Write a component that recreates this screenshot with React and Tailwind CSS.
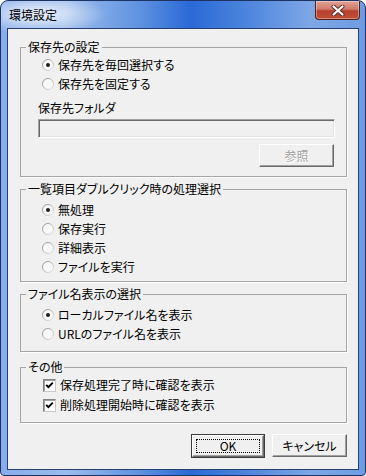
import React from 'react'

const FONT = "font-['Noto_Sans_CJK_JP','Noto_Sans',sans-serif] [font-feature-settings:'palt']"

function Radio({ checked }) {
  return (
    <svg width="12" height="12" viewBox="0 0 12 12" className="shrink-0">
      <defs>
        <linearGradient id="rb" x1="0" y1="0" x2="1" y2="1">
          <stop offset="0" stopColor="#8c8c8c" />
          <stop offset="1" stopColor="#e6e6e6" />
        </linearGradient>
      </defs>
      <circle cx="6" cy="6" r="5.5" fill="#f8f8f8" stroke="url(#rb)" />
      {checked && <circle cx="6" cy="6" r="2" fill="#1e1e1e" />}
    </svg>
  )
}

function Check() {
  return (
    <span className="w-[13px] h-[13px] shrink-0 border border-t-[#808080] border-l-[#808080] border-b-[#c8c8c8] border-r-[#c8c8c8] bg-white shadow-[inset_1px_1px_0_#a0a0a0] flex items-center justify-center">
      <svg width="9" height="9" viewBox="0 0 9 9">
        <path d="M1.2 3.8 L3.4 6.2 L7.8 1.6" stroke="#000" strokeWidth="1.9" fill="none" />
      </svg>
    </span>
  )
}

function RadioRow({ checked, children }) {
  return (
    <div className="h-[19px] flex items-center gap-[4px]">
      <Radio checked={checked} />
      <span>{children}</span>
    </div>
  )
}

function CheckRow({ children }) {
  return (
    <div className="h-[20px] flex items-center gap-[4px]">
      <Check />
      <span>{children}</span>
    </div>
  )
}

function Group({ title, className = '', children }) {
  return (
    <fieldset className={`ml-[12px] w-[327px] border border-[#a5a5a5] shadow-[1px_1px_0_#fff] ${className}`}>
      <legend className="ml-[5px] px-[2px] h-[12px] leading-[12px]">{title}</legend>
      {children}
    </fieldset>
  )
}

function ClassicButton({ children, disabled, isDefault }) {
  const face = (
    <div className="h-full w-full border border-t-white border-l-white border-b-[#696969] border-r-[#696969] shadow-[inset_-1px_-1px_0_#a0a0a0] flex items-center justify-center">
      {isDefault ? (
        <div className="w-[calc(100%-6px)] h-[calc(100%-6px)] border border-dotted border-black flex items-center justify-center">
          {children}
        </div>
      ) : (
        <span className={disabled ? 'text-[#a0a0a0] [text-shadow:1px_1px_0_#fff]' : ''}>{children}</span>
      )}
    </div>
  )
  if (isDefault) {
    return <div className="w-[74px] h-[24px] border border-[#3c3c3c]">{face}</div>
  }
  return <div className="w-[75px] h-[23px]">{face}</div>
}

export default function App() {
  return (
    <div className={`${FONT} text-[12px] leading-[12px] text-black w-[366px] h-[476px] flex flex-col border border-[#1d3463] rounded-t-[8px] rounded-b-[4px] overflow-hidden bg-[radial-gradient(ellipse_70px_20px_at_36px_13px,rgba(255,255,255,0.85),rgba(255,255,255,0)),linear-gradient(90deg,#86acea_0%,#9cbcec_18%,#5f92e0_38%,#2a69d6_52%,#4e86dd_68%,#7ea7e6_85%,#6e9ce3_100%)]`}>
      {/* title bar */}
      <div className="h-[27px] flex items-start justify-between shrink-0">
        <span className="pl-[8px] pt-[8px]">環境設定</span>
        <div className="mr-[5px] w-[45px] h-[19px] rounded-b-[4px] border border-t-0 border-[#52231b] bg-[linear-gradient(180deg,#e2a295_0%,#d07a6b_45%,#b5402c_55%,#c24f37_100%)] shadow-[inset_0_0_0_1px_rgba(255,255,255,0.35)] flex items-center justify-center">
          <svg width="14" height="11" viewBox="0 0 14 11">
            <path d="M2.5 1.5 L11.5 9.5 M11.5 1.5 L2.5 9.5" stroke="#5a2a22" strokeWidth="4" strokeLinecap="round" />
            <path d="M2.5 1.5 L11.5 9.5 M11.5 1.5 L2.5 9.5" stroke="#ffffff" strokeWidth="2.2" strokeLinecap="round" />
          </svg>
        </div>
      </div>

      {/* client area */}
      <div className="ml-[6px] w-[352px] h-[442px] border border-[#23406f] bg-[#f0f0f0] flex flex-col">
        <Group title="保存先の設定" className="mt-[12px]">
          <div className="pl-[21px] mt-[2px]">
            <RadioRow checked>保存先を毎回選択する</RadioRow>
            <RadioRow>保存先を固定する</RadioRow>
          </div>
          <div className="pl-[17px] mt-[8px] h-[14px] flex items-center">保存先フォルダ</div>
          <div className="ml-[17px] mt-[4px] w-[297px] h-[19px] border border-t-[#a0a0a0] border-l-[#a0a0a0] border-b-white border-r-white shadow-[inset_1px_1px_0_#696969,inset_-1px_-1px_0_#e3e3e3] bg-[#f0f0f0]" />
          <div className="ml-[238px] mt-[6px] mb-[9px]">
            <ClassicButton disabled>参照</ClassicButton>
          </div>
        </Group>

        <Group title="一覧項目ダブルクリック時の処理選択" className="mt-[6px]">
          <div className="pl-[21px] mt-[5px] pb-[5px]">
            <RadioRow checked>無処理</RadioRow>
            <RadioRow>保存実行</RadioRow>
            <RadioRow>詳細表示</RadioRow>
            <RadioRow>ファイルを実行</RadioRow>
          </div>
        </Group>

        <Group title="ファイル名表示の選択" className="mt-[6px]">
          <div className="pl-[21px] mt-[5px] pb-[8px]">
            <RadioRow checked>ローカルファイル名を表示</RadioRow>
            <RadioRow>URLのファイル名を表示</RadioRow>
          </div>
        </Group>

        <Group title="その他" className="mt-[9px]">
          <div className="pl-[22px] mt-[2px] pb-[7px]">
            <CheckRow>保存処理完了時に確認を表示</CheckRow>
            <CheckRow>削除処理開始時に確認を表示</CheckRow>
          </div>
        </Group>

        <div className="ml-[12px] w-[327px] mt-[11px] flex justify-end items-start gap-[7px]">
          <ClassicButton isDefault>OK</ClassicButton>
          <ClassicButton>キャンセル</ClassicButton>
        </div>
      </div>
    </div>
  )
}
